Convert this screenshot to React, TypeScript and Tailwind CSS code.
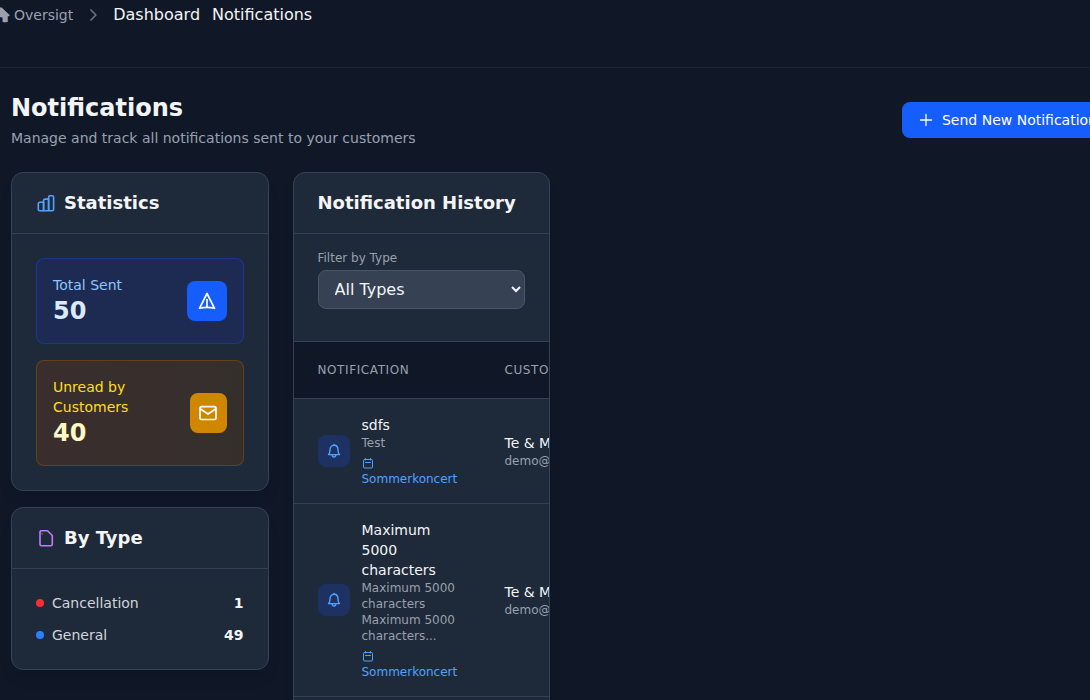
import type { ReactNode } from "react";
import clsx from "clsx";

type IconProps = { className?: string };

function Svg({ className, size = 24, children }: { className?: string; size?: number; children: ReactNode }) {
  return (
    <svg
      className={className}
      viewBox={`0 0 ${size} ${size}`}
      fill="none"
      stroke="currentColor"
      strokeWidth="2"
      strokeLinecap="round"
      strokeLinejoin="round"
      aria-hidden="true"
    >
      {children}
    </svg>
  );
}

const HomeIcon = ({ className }: IconProps) => (
  <svg className={className} viewBox="0 0 20 20" fill="currentColor" aria-hidden="true">
    <path d="M10.700 1.800a1 1 0 0 0-1.400 0l-8.600 8a.9.9 0 0 0 .6 1.500H2.500V17a1 1 0 0 0 1 1H7.300a1 1 0 0 0 1-1v-3.500a1 1 0 0 1 1-1h1.400a1 1 0 0 1 1 1V17a1 1 0 0 0 1 1h3.800a1 1 0 0 0 1-1v-5.700h1.200a.9.9 0 0 0 .6-1.500z" />
  </svg>
);

const ChevronIcon = ({ className }: IconProps) => (
  <Svg className={className}>
    <path d="m9.500 6 6 6-6 6" />
  </Svg>
);

const PlusIcon = ({ className }: IconProps) => (
  <Svg className={className} size={16}>
    <path d="M8 2.500v11M2.500 8h11" strokeWidth="1.300" />
  </Svg>
);

const BarsIcon = ({ className }: IconProps) => (
  <Svg className={className} size={20}>
    <g strokeWidth="1.600">
      <path d="M7.600 17.700H3.800a1.500 1.500 0 0 1-1.500-1.500v-5.400a1.500 1.500 0 0 1 1.500-1.500h3.800z" />
      <path d="M12.600 17.700h-5V7.600a1.500 1.500 0 0 1 1.500-1.500h3.500z" />
      <rect x="12.600" y="2.700" width="5" height="15" rx="1.500" />
    </g>
  </Svg>
);

const FileIcon = ({ className }: IconProps) => (
  <Svg className={className} size={20}>
    <g strokeWidth="1.600">
      <path d="M5.500 2.700h6l4.800 4.800v8.700a1.500 1.500 0 0 1-1.500 1.500H5.500A1.500 1.500 0 0 1 4 16.200v-12a1.500 1.500 0 0 1 1.500-1.500z" />
      <path d="M6 5.800h.1" strokeWidth="1.200" />
    </g>
  </Svg>
);

const SendIcon = ({ className }: IconProps) => (
  <Svg className={className} size={20}>
    <path d="M10 2.500 2.500 17.300c5-1.300 10-1.300 15 0z" strokeWidth="1.700" />
    <path d="M10 8.500V16" strokeWidth="1.700" />
  </Svg>
);

const MailIcon = ({ className }: IconProps) => (
  <Svg className={className} size={20}>
    <g strokeWidth="1.700">
      <rect x="2" y="3.700" width="16" height="12.800" rx="1.800" />
      <path d="m2.500 6 7.500 5 7.500-5" />
    </g>
  </Svg>
);

const BellIcon = ({ className }: IconProps) => (
  <Svg className={className} size={16}>
    <g strokeWidth="1.400">
      <path d="M2.500 11.600c1-1 1.500-2 1.500-4.700C4 4.200 5.700 2.300 8 2.300s4 1.900 4 4.600c0 2.700.5 3.700 1.500 4.700z" />
      <path d="M8 1.500v.5M6.200 12c.1 1.300.8 2.100 1.800 2.100s1.700-.8 1.800-2.100" />
    </g>
  </Svg>
);

const CalendarIcon = ({ className }: IconProps) => (
  <Svg className={className} size={12}>
    <rect x="1.500" y="2.500" width="9" height="8.500" rx="1" strokeWidth="1" />
    <path d="M3.500 1.500V3M8.500 1.500V3M3.500 5.500h5" strokeWidth="1" />
  </Svg>
);

const types = [
  { name: "Cancellation", count: 1, dot: "bg-red-500" },
  { name: "General", count: 49, dot: "bg-blue-500" },
];

const notifications = [
  { title: "sdfs", body: "Test", event: "Sommerkoncert", customer: "Te & Mads", email: "demo@demo.dk" },
  {
    title: "Maximum 5000 characters",
    body: "Maximum 5000 characters Maximum 5000 characters...",
    event: "Sommerkoncert",
    customer: "Te & Mads",
    email: "demo@demo.dk",
  },
  { title: "General", body: "Test", event: "Sommerkoncert", customer: "Te & Mads", email: "demo@demo.dk" },
];

function Card({ title, icon, children }: { title: string; icon?: ReactNode; children: ReactNode }) {
  return (
    <section className="overflow-hidden rounded-xl border border-gray-700 bg-gray-800 shadow-lg">
      <h2 className="flex items-center gap-2 border-b border-gray-700 px-6 py-4 text-lg font-semibold whitespace-nowrap">
        {icon}
        {title}
      </h2>
      {children}
    </section>
  );
}

function Stat({
  label,
  value,
  icon,
  box,
  labelColor,
  valueColor,
  iconBg,
}: {
  label: string;
  value: number;
  icon: ReactNode;
  box: string;
  labelColor: string;
  valueColor: string;
  iconBg: string;
}) {
  return (
    <div className={clsx("flex items-center justify-between rounded-lg border p-4", box)}>
      <div>
        <p className={clsx("text-sm", labelColor)}>{label}</p>
        <p className={clsx("text-2xl font-bold", valueColor)}>{value}</p>
      </div>
      <div className={clsx("flex h-10 w-10 items-center justify-center rounded-lg text-white", iconBg)}>{icon}</div>
    </div>
  );
}

function HistoryTable() {
  return (
    <div className="overflow-x-hidden border-t border-gray-700">
      <table className="w-[720px] table-fixed text-left">
        <thead className="bg-gray-900 text-xs tracking-wider text-gray-400 uppercase">
          <tr className="border-b border-gray-700">
            <th className="w-[187px] px-6 py-5 font-medium">Notification</th>
            <th className="px-6 py-5 font-medium">Customer</th>
          </tr>
        </thead>
        <tbody>
          {notifications.map((item, i) => (
            <tr key={i} className="border-b border-gray-700">
              <td className="py-4 pr-5 pl-6">
                <div className="flex items-center gap-3">
                  <div className="flex h-8 w-8 shrink-0 items-center justify-center rounded-lg bg-blue-900/50 text-blue-400">
                    <BellIcon className="h-4 w-4" />
                  </div>
                  <div className="min-w-0">
                    <p className="text-sm font-medium">{item.title}</p>
                    <p className="text-xs text-gray-400">{item.body}</p>
                    <a href="#event" className="mt-1 block text-xs text-blue-400">
                      <span className="flex h-4 items-center">
                        <CalendarIcon className="h-3 w-3" />
                      </span>
                      {item.event}
                    </a>
                  </div>
                </div>
              </td>
              <td className="px-6 py-4">
                <p className="text-sm font-medium">{item.customer}</p>
                <p className="text-xs text-gray-400">{item.email}</p>
              </td>
            </tr>
          ))}
        </tbody>
      </table>
    </div>
  );
}

export default function App() {
  return (
    <div className="h-screen overflow-hidden bg-gray-900 font-['DejaVu_Sans',sans-serif] text-gray-100">
      <header className="h-17 border-b border-gray-800/80">
        <nav aria-label="Breadcrumb" className="-ml-2 flex items-center pt-[3px]">
          <a href="#oversigt" className="flex items-center gap-1 text-sm text-gray-400">
            <HomeIcon className="h-4.5 w-4.5" />
            Oversigt
          </a>
          <ChevronIcon className="mx-2.5 h-5 w-5 text-gray-500" />
          <a href="#dashboard">Dashboard</a>
          <span className="ml-3">Notifications</span>
        </nav>
      </header>

      <main className="-mr-[23px] py-6 pl-[11px]">
        <div className="flex items-center justify-between">
          <div>
            <h1 className="text-2xl font-bold">Notifications</h1>
            <p className="mt-1 text-sm text-gray-400">Manage and track all notifications sent to your customers</p>
          </div>
          <button className="flex items-center gap-2 rounded-lg bg-blue-600 px-4 py-2 text-sm font-medium whitespace-nowrap text-white">
            <PlusIcon className="h-4 w-4" />
            Send New Notification
          </button>
        </div>

        <div className="mt-6 grid grid-cols-4 items-start gap-6">
          <div className="space-y-4">
            <Card title="Statistics" icon={<BarsIcon className="h-5 w-5 text-blue-400" />}>
              <div className="space-y-4 p-6">
                <Stat
                  label="Total Sent"
                  value={50}
                  icon={<SendIcon className="h-5 w-5" />}
                  box="border-blue-800/70 bg-[#1d2b52]"
                  labelColor="text-blue-300"
                  valueColor="text-blue-100"
                  iconBg="bg-blue-600"
                />
                <Stat
                  label="Unread by Customers"
                  value={40}
                  icon={<MailIcon className="h-5 w-5" />}
                  box="border-yellow-800/60 bg-linear-to-r from-[#3a2e2d] to-[#352f2c]"
                  labelColor="text-yellow-300"
                  valueColor="text-yellow-100"
                  iconBg="bg-yellow-600"
                />
              </div>
            </Card>
            <Card title="By Type" icon={<FileIcon className="h-5 w-5 text-purple-400" />}>
              <ul className="space-y-3 p-6 text-sm">
                {types.map((type) => (
                  <li key={type.name} className="flex items-center gap-2">
                    <span className={clsx("h-2 w-2 rounded-full", type.dot)} />
                    <span className="text-gray-300">{type.name}</span>
                    <span className="ml-auto font-semibold">{type.count}</span>
                  </li>
                ))}
              </ul>
            </Card>
          </div>

          <Card title="Notification History">
            <div className="px-6 pt-4 pb-8">
              <label htmlFor="type-filter" className="mb-1 block text-xs text-gray-400">
                Filter by Type
              </label>
              <select
                id="type-filter"
                className="block h-[39px] w-full rounded-lg border border-gray-600 bg-gray-700 px-3 text-base"
              >
                <option>All Types</option>
                <option>Cancellation</option>
                <option>General</option>
              </select>
            </div>
            <HistoryTable />
          </Card>
        </div>
      </main>
    </div>
  );
}
